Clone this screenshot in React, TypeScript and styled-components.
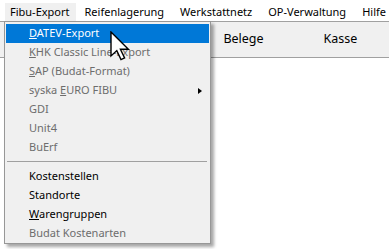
import React from "react";
import styled, { createGlobalStyle } from "styled-components";

const Global = createGlobalStyle`
  html, body { margin: 0; padding: 0; background: #ffffff; }
  body { font-family: "Noto Sans", "Open Sans", sans-serif; font-size: 11px; color: #000; }
`;

const Screen = styled.div`
  position: relative;
  width: 389px;
  height: 249px;
  overflow: hidden;
  background: #ffffff;
`;

const MenuBar = styled.div`
  display: flex;
  height: 21px;
  padding-left: 5px;
  background: #ffffff;
`;

const MenuTitle = styled.div<{ $active?: boolean; $pl: number; $pr: number }>`
  margin-top: 3px;
  height: 18px;
  line-height: 17px;
  padding: 0 ${(p) => p.$pr}px 0 ${(p) => p.$pl}px;
  background: ${(p) => (p.$active ? "#f0f0f0" : "transparent")};
  white-space: nowrap;
`;

const Strip = styled.div`
  display: flex;
  height: 35px;
  padding-left: 195px;
  background: #f0f0f0;
  border-top: 1px solid #a0a0a0;
  border-bottom: 1px solid #a0a0a0;
`;

const StripTab = styled.div`
  width: 101px;
  text-align: center;
  line-height: 33px;
  font-size: 12.5px;
`;

const Dropdown = styled.div`
  position: absolute;
  left: 4px;
  top: 21px;
  width: 203px;
  padding: 2px 1px 0 1px;
  background: #f0f0f0;
  border: 1px solid #979797;
  box-shadow: 3px 3px 3px rgba(0, 0, 0, 0.35);
`;

const Item = styled.div<{ $disabled?: boolean; $selected?: boolean }>`
  display: flex;
  align-items: center;
  justify-content: space-between;
  height: 19px;
  line-height: 17px;
  padding: 0 7px 2px 23px;
  box-sizing: border-box;
  white-space: nowrap;
  color: ${(p) => (p.$selected ? "#ffffff" : p.$disabled ? "#6d6d6d" : "#000000")};
  background: ${(p) => (p.$selected ? "#0078d7" : "transparent")};
`;

const Key = styled.span`
  text-decoration: underline;
  text-underline-offset: 1px;
`;

const SubArrow = styled.span`
  width: 0;
  height: 0;
  margin-top: 2px;
  border-top: 3.5px solid transparent;
  border-bottom: 3.5px solid transparent;
  border-left: 4px solid #000000;
`;

const Separator = styled.div`
  height: 1px;
  margin: 4px 2px 5px 1px;
  background: #a0a0a0;
`;

const Cursor = styled.svg`
  position: absolute;
  left: 110px;
  top: 31px;
`;

type Entry =
  | { sep: true }
  | { sep?: false; pre?: string; key?: string; post: string; disabled?: boolean; selected?: boolean; sub?: boolean };

const entries: Entry[] = [
  { key: "D", post: "ATEV-Export", selected: true },
  { key: "K", post: "HK Classic Line-Export", disabled: true },
  { key: "S", post: "AP (Budat-Format)", disabled: true },
  { pre: "syska ", key: "E", post: "URO FIBU", disabled: true, sub: true },
  { post: "GDI", disabled: true },
  { post: "Unit4", disabled: true },
  { post: "BuErf", disabled: true },
  { sep: true },
  { post: "Kostenstellen" },
  { post: "Standorte" },
  { key: "W", post: "arengruppen" },
  { post: "Budat Kostenarten", disabled: true },
];

const menus = [
  { label: "Fibu-Export", pl: 5, pr: 6, active: true },
  { label: "Reifenlagerung", pl: 9, pr: 7 },
  { label: "Werkstattnetz", pl: 9, pr: 7 },
  { label: "OP-Verwaltung", pl: 9, pr: 7 },
  { label: "Hilfe", pl: 9, pr: 7 },
];

export default function App() {
  return (
    <>
      <Global />
      <Screen>
        <MenuBar>
          {menus.map((m) => (
            <MenuTitle key={m.label} $active={m.active} $pl={m.pl} $pr={m.pr}>
              {m.label}
            </MenuTitle>
          ))}
        </MenuBar>
        <Strip>
          <StripTab>Belege</StripTab>
          <StripTab>Kasse</StripTab>
        </Strip>
        <Dropdown>
          {entries.map((e, i) =>
            e.sep ? (
              <Separator key={i} />
            ) : (
              <Item key={i} $disabled={e.disabled} $selected={e.selected}>
                <span>
                  {e.pre}
                  {e.key && <Key>{e.key}</Key>}
                  {e.post}
                </span>
                {e.sub && <SubArrow />}
              </Item>
            )
          )}
        </Dropdown>
        <Cursor width="22" height="32" viewBox="0 0 22 32">
          <path
            d="M1 1 L1 25 L6.8 19.6 L11 28.6 L14.6 27 L10.4 18.2 L18.4 18.2 Z"
            fill="#ffffff"
            stroke="#000000"
            strokeWidth="1.4"
            strokeLinejoin="miter"
          />
        </Cursor>
      </Screen>
    </>
  );
}
